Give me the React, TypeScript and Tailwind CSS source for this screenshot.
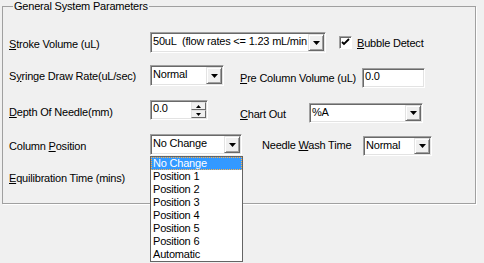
import React from "react";

const font = { fontFamily: '"Liberation Sans", Arial, sans-serif' };

function U({ children }: { children: React.ReactNode }) {
  return <span className="underline underline-offset-[1px]">{children}</span>;
}

function Arrow() {
  return (
    <svg width="7" height="4" viewBox="0 0 7 4">
      <path d="M0 0h7L3.5 4z" fill="#000" />
    </svg>
  );
}

function DropButton() {
  return (
    <div className="flex w-[16px] items-center justify-center self-stretch border border-t-[#e3e3e3] border-l-[#e3e3e3] border-r-[#696969] border-b-[#696969] bg-[#f0f0f0] shadow-[inset_1px_1px_0_#fff,inset_-1px_-1px_0_#a0a0a0]">
      <Arrow />
    </div>
  );
}

function Combo({ value, className }: { value: string; className: string }) {
  return (
    <div
      className={`flex border border-t-[#a0a0a0] border-l-[#a0a0a0] border-r-white border-b-white bg-white p-[1px] shadow-[inset_1px_1px_0_#696969,inset_-1px_-1px_0_#e3e3e3] ${className}`}
    >
      <div className="flex-1 overflow-hidden whitespace-pre pl-[1px] text-[11px] leading-[15px]">{value}</div>
      <DropButton />
    </div>
  );
}

function TextBox({ value, className }: { value: string; className: string }) {
  return (
    <div
      className={`border border-t-[#a0a0a0] border-l-[#a0a0a0] border-r-white border-b-white bg-white px-[2px] pt-[1px] text-[11px] leading-[13px] shadow-[inset_1px_1px_0_#696969,inset_-1px_-1px_0_#e3e3e3] ${className}`}
    >
      {value}
    </div>
  );
}

const items = ["No Change", "Position 1", "Position 2", "Position 3", "Position 4", "Position 5", "Position 6", "Automatic"];

export default function App() {
  return (
    <div className="h-[263px] w-[484px] bg-[#f0f0f0] pl-[2px] tracking-[-0.2px] text-black" style={font}>
      <fieldset className="relative h-[204px] w-[474px] border border-[#a0a0a0] pl-[6px] shadow-[1px_1px_0_#fff]">
        <legend className="ml-[4px] px-[1px] text-[11px] leading-[13px]">General System Parameters</legend>
        <div className="flex flex-col pt-[13px] text-[11px] leading-[13px]">
          {/* row 1 */}
          <div className="flex h-[34px] items-start">
            <div className="mt-[12px] w-[141px]">
              <U>S</U>troke Volume (uL)
            </div>
            <Combo value="50uL  (flow rates <= 1.23 mL/min" className="mt-[6px] h-[21px] w-[176px]" />
            <div className="ml-[13px] mt-[10px] flex h-[13px] w-[13px] items-center justify-center border border-t-[#a0a0a0] border-l-[#a0a0a0] border-r-white border-b-white bg-white shadow-[inset_1px_1px_0_#696969]">
              <svg width="9" height="9" viewBox="0 0 9 9">
                <path d="M1 4l2 2 5-5" stroke="#000" strokeWidth="1.8" fill="none" />
              </svg>
            </div>
            <div className="ml-[5px] mt-[11px]">
              <U>B</U>ubble Detect
            </div>
          </div>
          {/* row 2 */}
          <div className="flex h-[34px] items-start">
            <div className="mt-[10px] w-[141px]">
              S<U>y</U>ringe Draw Rate(uL/sec)
            </div>
            <Combo value="Normal" className="mt-[5px] h-[21px] w-[74px]" />
            <div className="ml-[16px] mt-[12px] w-[122px]">
              <U>P</U>re Column Volume (uL)
            </div>
            <TextBox value="0.0" className="mt-[8px] h-[20px] w-[63px]" />
          </div>
          {/* row 3 */}
          <div className="flex h-[34px] items-start">
            <div className="mt-[12px] w-[141px]">
              <U>D</U>epth Of Needle(mm)
            </div>
            <div className="mt-[6px] flex h-[20px] w-[58px] border border-t-[#a0a0a0] border-l-[#a0a0a0] border-r-white border-b-white bg-white p-[1px] shadow-[inset_1px_1px_0_#696969,inset_-1px_-1px_0_#e3e3e3]">
              <div className="flex-1 pl-[1px]">0.0</div>
              <div className="flex w-[15px] flex-col">
                <div className="flex flex-1 items-center justify-center border border-t-[#e3e3e3] border-l-[#e3e3e3] border-r-[#696969] border-b-[#696969] bg-[#f0f0f0]">
                  <svg width="5" height="3" viewBox="0 0 5 3">
                    <path d="M0 3h5L2.5 0z" fill="#000" />
                  </svg>
                </div>
                <div className="flex flex-1 items-center justify-center border border-t-[#e3e3e3] border-l-[#e3e3e3] border-r-[#696969] border-b-[#696969] bg-[#f0f0f0]">
                  <svg width="5" height="3" viewBox="0 0 5 3">
                    <path d="M0 0h5L2.5 3z" fill="#000" />
                  </svg>
                </div>
              </div>
            </div>
            <div className="ml-[32px] mt-[14px] w-[69px]">
              <U>C</U>hart Out
            </div>
            <Combo value="%A" className="mt-[9px] h-[20px] w-[114px]" />
          </div>
          {/* row 4 */}
          <div className="flex h-[34px] items-start">
            <div className="mt-[12px] w-[141px]">
              Column <U>P</U>osition
            </div>
            <div className="relative mt-[6px]">
              <Combo value="No Change" className="h-[21px] w-[92px]" />
              <div className="absolute left-0 top-[22px] z-10 w-[93px] border border-[#646464] bg-white">
                {items.map((it, i) => (
                  <div
                    key={it}
                    className={
                      i === 0
                        ? "h-[13px] border border-dotted border-[#ffb24a] bg-[#3399ff] pl-[1px] leading-[11px] text-white"
                        : "h-[13px] pl-[2px] leading-[13px]"
                    }
                  >
                    {it}
                  </div>
                ))}
              </div>
            </div>
            <div className="ml-[20px] mt-[11px] w-[101px]">
              Needle <U>W</U>ash Time
            </div>
            <Combo value="Normal" className="mt-[8px] h-[20px] w-[69px]" />
          </div>
          {/* row 5 */}
          <div className="flex h-[34px] items-start">
            <div className="mt-[10px] w-[141px]">
              <U>E</U>quilibration Time (mins)
            </div>
          </div>
        </div>
      </fieldset>
    </div>
  );
}
